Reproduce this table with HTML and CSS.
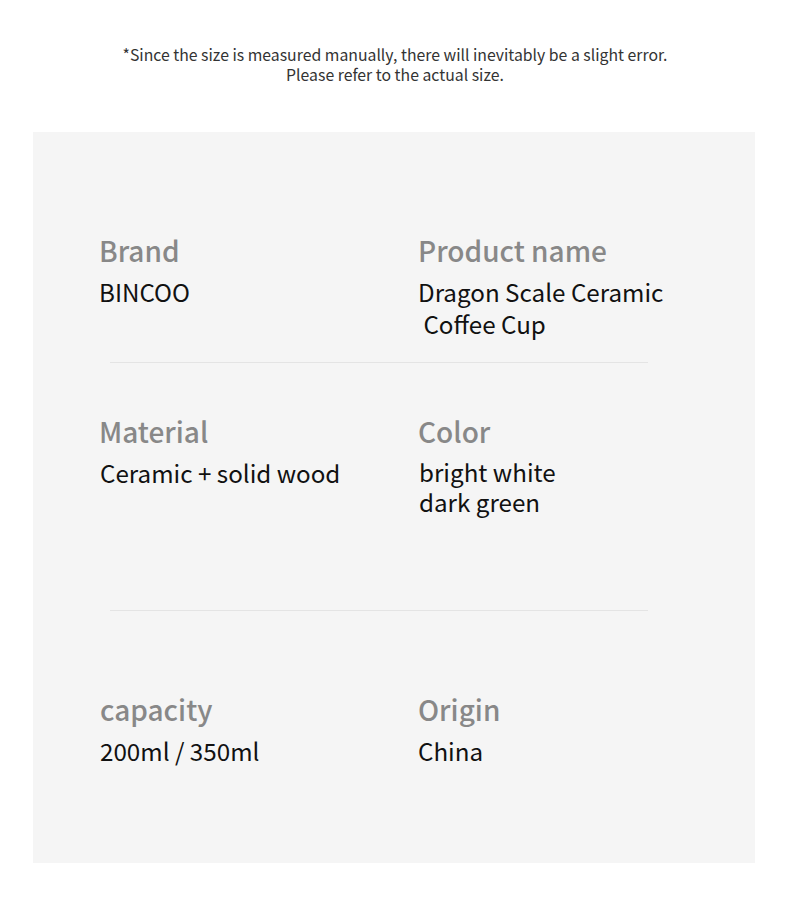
FILE: index.html
```html
<!DOCTYPE html>
<html>
<head>
<meta charset="utf-8">
<link rel="stylesheet" href="styles.css">
</head>
<body>
<p class="note">*Since the size is measured manually, there will inevitably be a slight error.<br>Please refer to the actual size.</p>
<section class="panel">
  <div class="row row-1">
    <div class="cell">
      <div class="label">Brand</div>
      <div class="value">BINCOO</div>
    </div>
    <div class="cell">
      <div class="label">Product name</div>
      <div class="value">Dragon Scale Ceramic<br>&nbsp;Coffee Cup</div>
    </div>
  </div>
  <hr class="divider div-1">
  <div class="row row-2">
    <div class="cell">
      <div class="label">Material</div>
      <div class="value shift">Ceramic + solid wood</div>
    </div>
    <div class="cell">
      <div class="label">Color</div>
      <div class="value shift tight">bright white<br>dark green</div>
    </div>
  </div>
  <hr class="divider div-2">
  <div class="row row-3">
    <div class="cell">
      <div class="label shift">capacity</div>
      <div class="value shift">200ml / 350ml</div>
    </div>
    <div class="cell">
      <div class="label">Origin</div>
      <div class="value">China</div>
    </div>
  </div>
</section>
</body>
</html>
```
FILE: styles.css
```css
html, body {
  margin: 0;
  padding: 0;
  background: #ffffff;
}
body {
  font-family: "Noto Sans CJK SC", "Noto Sans", sans-serif;
  width: 790px;
  height: 917px;
  overflow: hidden;
}
.note {
  margin: 0;
  padding-top: 45px;
  height: 132px;
  box-sizing: border-box;
  text-align: center;
  font-size: 15.8px;
  line-height: 20px;
  color: #333333;
}
.panel {
  margin-left: 33px;
  width: 722px;
  height: 731px;
  background: #f5f5f5;
  padding-top: 100px;
  box-sizing: border-box;
}
.row {
  display: grid;
  grid-template-columns: 319px 1fr;
  padding-left: 66px;
}
.label {
  font-size: 28px;
  line-height: 36px;
  color: #888888;
  font-weight: 500;
}
.value {
  margin-top: 8px;
  font-size: 24.2px;
  line-height: 32px;
  color: #111111;
}
.value.tight {
  line-height: 30px;
}
.shift {
  padding-left: 1px;
}
.divider {
  border: 0;
  margin: 22px 0 0 77px;
  width: 538px;
  height: 1px;
  background: #e4e4e4;
}
.row-2 {
  margin-top: 50px;
}
.div-2 {
  margin-top: 93px;
}
.row-3 {
  margin-top: 80px;
}
```
